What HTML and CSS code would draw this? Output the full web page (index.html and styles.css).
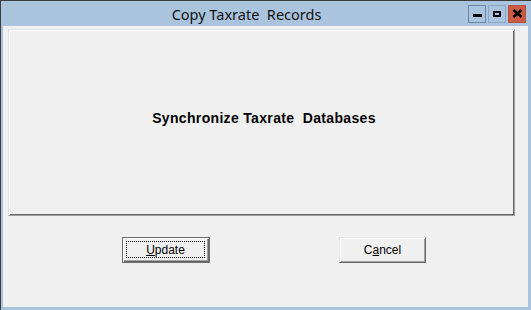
FILE: index.html
```html
<!DOCTYPE html>
<html lang="en">
<head>
  <meta charset="UTF-8">
  <title>Copy Taxrate Records</title>
  <link rel="stylesheet" href="styles.css">
</head>
<body>

  <div class="window">
    <div class="titlebar">
      <div class="title">Copy Taxrate  Records</div>
      <div class="caption-buttons">
        <div class="cap-btn min"><span></span></div>
        <div class="cap-btn max"><span></span></div>
        <div class="cap-btn close">
          <svg width="11" height="9" viewBox="0 0 11 9">
            <path d="M1.5 1 L9.5 8 M9.5 1 L1.5 8" stroke="#000" stroke-width="2.6" fill="none"/>
          </svg>
        </div>
      </div>
    </div>

    <div class="client">
      <div class="panel">
        <div class="heading">Synchronize Taxrate  Databases</div>
      </div>

      <div class="actions">
        <button class="btn default"><span class="focus"><u>U</u>pdate</span></button>
        <button class="btn cancel">C<u>a</u>ncel</button>
      </div>
    </div>
  </div>

</body>
</html>
```

FILE: styles.css
```css
body {
  margin: 0;
  font-family: 'Liberation Sans', Arial, sans-serif;
}

.window {
  width: 531px;
  height: 310px;
  box-sizing: border-box;
  display: flex;
  flex-direction: column;
  background: #aac4de;
  border-top: 1px solid #3d3d3d;
  border-left: 1px solid #3d3d3d;
  padding: 0 3px 3px 2px;
}

.titlebar {
  height: 25px;
  display: flex;
  align-items: flex-start;
}

.title {
  flex: 1;
  text-align: center;
  padding-left: 22px;
  padding-top: 3px;
  font-family: 'Noto Sans', sans-serif;
  font-size: 14.5px;
  color: #111;
  white-space: pre;
}

.caption-buttons {
  display: flex;
  gap: 2px;
  margin-top: 4px;
  margin-right: 2px;
}

.cap-btn {
  width: 18px;
  height: 18px;
  box-sizing: border-box;
  border: 1px solid #6c88a8;
  display: flex;
  align-items: center;
  justify-content: center;
}

.cap-btn.min span {
  width: 9px;
  height: 3px;
  background: #000;
  margin-top: 3px;
}

.cap-btn.max {
  border-color: #8aa6c4;
}

.cap-btn.max span {
  width: 4px;
  height: 2px;
  border: 2px solid #000;
  margin-top: -1px;
}

.cap-btn.close {
  background: #cd5b45;
  border-color: #b4503e;
}

.cap-btn.close svg {
  margin-top: -1px;
}

.client {
  flex: 1;
  background: #f0f0f0;
  padding: 3px 13px 0 5px;
}

.panel {
  height: 187px;
  box-sizing: border-box;
  border-top: 1px solid #e3e3e3;
  border-left: 1px solid #e3e3e3;
  border-right: 1px solid #a0a0a0;
  border-bottom: 1px solid #a0a0a0;
  box-shadow: inset 1px 1px 0 #ffffff, inset -1px -1px 0 #696969;
  display: flex;
  align-items: center;
  justify-content: center;
  padding-bottom: 10px;
  padding-left: 5px;
}

.heading {
  font-weight: bold;
  font-size: 14px;
  letter-spacing: 0.33px;
  color: #000;
  white-space: pre;
}

.actions {
  display: flex;
  margin-top: 21px;
  padding-left: 114px;
}

.btn {
  height: 26px;
  box-sizing: border-box;
  background: #f0f0f0;
  font-family: 'Liberation Sans', Arial, sans-serif;
  font-size: 12px;
  color: #000;
  padding: 0;
  cursor: pointer;
}

.btn.default {
  width: 88px;
  border: 1px solid #6d6d6d;
  box-shadow: inset 1px 1px 0 #ffffff, inset -1px -1px 0 #696969, inset -2px -2px 0 #a0a0a0;
  padding: 3px 4px 4px 3px;
}

.btn.default .focus {
  display: flex;
  align-items: center;
  justify-content: center;
  height: 100%;
  box-sizing: border-box;
  border: 1px dotted #000;
}

.btn.cancel {
  width: 87px;
  margin-left: 129px;
  border-top: 1px solid #e3e3e3;
  border-left: 1px solid #e3e3e3;
  border-right: 1px solid #696969;
  border-bottom: 1px solid #696969;
  box-shadow: inset 1px 1px 0 #ffffff, inset -1px -1px 0 #a0a0a0;
}
```
